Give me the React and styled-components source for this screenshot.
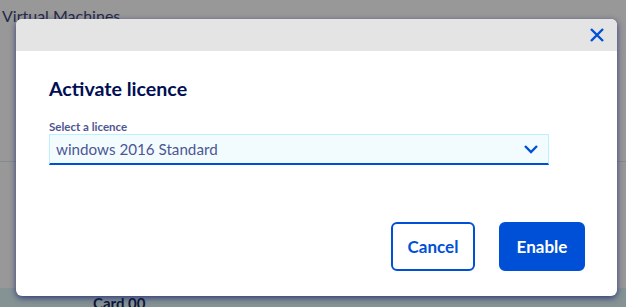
import styled, { createGlobalStyle } from 'styled-components'

const Global = createGlobalStyle`
  html, body { margin: 0; padding: 0; }
  body {
    width: 626px;
    height: 307px;
    overflow: hidden;
    font-family: Lato, "Noto Sans", sans-serif;
  }
`

const Page = styled.div`
  position: relative;
  width: 626px;
  height: 307px;
  background: #fff;
  overflow: hidden;
`

const PageTitle = styled.div`
  padding: 6px 0 0 2px;
  font-size: 16px;
  color: #2d3467;
  height: 155px;
  border-bottom: 1px solid #dde7f0;
`

const CardStrip = styled.div`
  margin-top: 126px;
  height: 30px;
  background: #dcf6f8;
  padding: 6px 0 0 93px;
  box-sizing: border-box;
  font-weight: 700;
  color: #000e53;
  font-size: 15px;
  line-height: 18px;
`

const Overlay = styled.div`
  position: absolute;
  inset: 0;
  background: rgba(30, 30, 30, 0.46);
`

const Modal = styled.div`
  position: absolute;
  left: 16px;
  top: 19px;
  width: 601px;
  height: 277px;
  background: #fff;
  border-radius: 6px;
  overflow: hidden;
  box-shadow: 0 2px 6px rgba(20, 30, 110, 0.75);
  display: flex;
  flex-direction: column;
`

const Header = styled.div`
  height: 32px;
  background: #e4e4e4;
  display: flex;
  justify-content: flex-end;
  align-items: center;
  padding-right: 12px;
`

const CloseBtn = styled.button`
  border: 0;
  background: none;
  padding: 0;
  width: 16px;
  height: 16px;
  display: flex;
  cursor: pointer;
`

const Body = styled.div`
  padding: 26px 33px 0 33px;
  display: flex;
  flex-direction: column;
  flex: 1;
`

const Title = styled.h2`
  margin: 0;
  font-size: 19.6px;
  font-weight: 700;
  color: #000e53;
  line-height: 24px;
`

const Label = styled.label`
  margin-top: 18px;
  font-size: 11.5px;
  font-weight: 700;
  color: #4d5693;
  line-height: 15px;
`

const SelectBox = styled.div`
  width: 500px;
  height: 31px;
  box-sizing: border-box;
  background: #f2fcff;
  border: 1px solid #bef1ff;
  border-bottom: 2px solid #0050d7;
  display: flex;
  align-items: center;
  justify-content: space-between;
  padding: 0 9px 0 6px;
  font-size: 15.2px;
  color: #4d5693;
`

const Actions = styled.div`
  margin-top: auto;
  margin-bottom: 25px;
  margin-right: -1px;
  display: flex;
  justify-content: flex-end;
  gap: 24px;
`

const Button = styled.button`
  height: 49px;
  width: ${p => p.w}px;
  box-sizing: border-box;
  border-radius: 6px;
  border: 2px solid #0050d7;
  background: ${p => (p.primary ? '#0050d7' : '#fff')};
  color: ${p => (p.primary ? '#fff' : '#0050d7')};
  font-family: Lato, "Noto Sans", sans-serif;
  font-size: 17px;
  font-weight: 700;
  cursor: pointer;
`

export default function App() {
  return (
    <>
      <Global />
      <Page>
        <PageTitle>Virtual Machines</PageTitle>
        <CardStrip>Card 00</CardStrip>
        <Overlay />
        <Modal>
          <Header>
            <CloseBtn aria-label="close">
              <svg width="16" height="16" viewBox="0 0 16 16">
                <path d="M2 2L14 14M14 2L2 14" stroke="#0050d7" strokeWidth="2.4" fill="none" />
              </svg>
            </CloseBtn>
          </Header>
          <Body>
            <Title>Activate licence</Title>
            <Label>Select a licence</Label>
            <SelectBox>
              <span>windows 2016 Standard</span>
              <svg width="16" height="10" viewBox="0 0 16 10">
                <path d="M2 2L8 8L14 2" stroke="#0050d7" strokeWidth="2.4" fill="none" />
              </svg>
            </SelectBox>
            <Actions>
              <Button w={84}>Cancel</Button>
              <Button w={86} primary>Enable</Button>
            </Actions>
          </Body>
        </Modal>
      </Page>
    </>
  )
}
